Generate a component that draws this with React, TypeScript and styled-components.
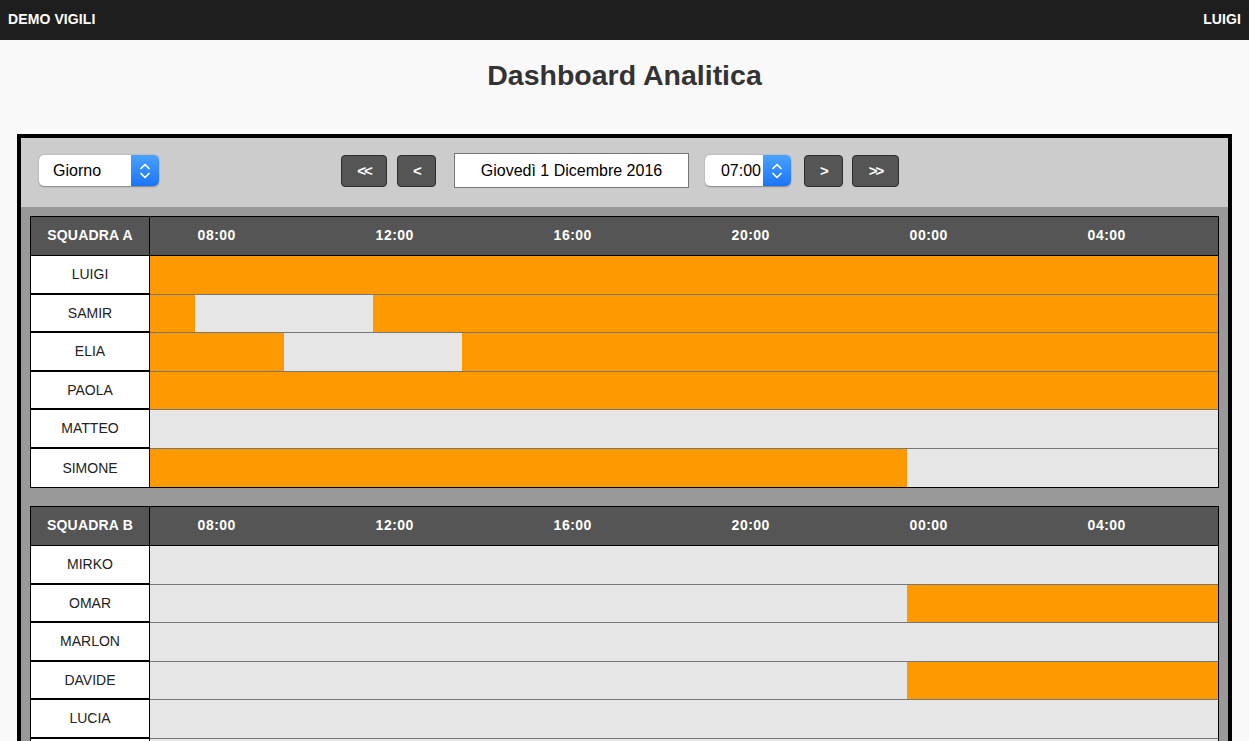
import React from "react";
import styled, { createGlobalStyle } from "styled-components";

const GlobalStyle = createGlobalStyle`
    html, body {
        margin: 0;
        padding: 0;
        background: #f9f9f9;
        font-family: "Liberation Sans", Arial, Helvetica, sans-serif;
        color: #222;
    }
    * {
        box-sizing: border-box;
    }
`;

type Shift = [number, number];

interface Member {
    name: string;
    shifts: Shift[];
}

interface Team {
    title: string;
    members: Member[];
}

// ore partono dalle 07:00, indice 0 = 07:00
const teams: Team[] = [
    {
        title: "SQUADRA A",
        members: [
            { name: "LUIGI", shifts: [[0, 24]] },
            { name: "SAMIR", shifts: [[0, 1], [5, 24]] },
            { name: "ELIA", shifts: [[0, 3], [7, 24]] },
            { name: "PAOLA", shifts: [[0, 24]] },
            { name: "MATTEO", shifts: [] },
            { name: "SIMONE", shifts: [[0, 17]] },
        ],
    },
    {
        title: "SQUADRA B",
        members: [
            { name: "MIRKO", shifts: [] },
            { name: "OMAR", shifts: [[17, 24]] },
            { name: "MARLON", shifts: [] },
            { name: "DAVIDE", shifts: [[17, 24]] },
            { name: "LUCIA", shifts: [] },
            { name: "", shifts: [] },
        ],
    },
];

const hours = Array.from({ length: 24 }, (_, i) => {
    const h = (7 + i) % 24;
    return i % 4 === 1 ? `${String(h).padStart(2, "0")}:00` : "";
});

const Chevrons = () => (
    <svg width="14" height="22" viewBox="0 0 14 22" fill="none">
        <path d="M3 8.5 L7 4.5 L11 8.5" stroke="#fff" strokeWidth="1.7" strokeLinecap="round" strokeLinejoin="round" />
        <path d="M3 13.5 L7 17.5 L11 13.5" stroke="#fff" strokeWidth="1.7" strokeLinecap="round" strokeLinejoin="round" />
    </svg>
);

export default function App() {
    return (
        <>
            <GlobalStyle />
            <TopBar>
                <Brand>DEMO VIGILI</Brand>
                <UserName>LUIGI</UserName>
            </TopBar>
            <Title>Dashboard Analitica</Title>
            <Panel>
                <Toolbar>
                    <Select $width={120}>
                        <SelectLabel>Giorno</SelectLabel>
                        <SelectArrow>
                            <Chevrons />
                        </SelectArrow>
                    </Select>
                    <Nav>
                        <NavButton $width={46}>&lt;&lt;</NavButton>
                        <NavButton $width={39}>&lt;</NavButton>
                        <DateBox>Giovedì 1 Dicembre 2016</DateBox>
                        <Select $width={86}>
                            <TimeLabel>07:00</TimeLabel>
                            <SelectArrow>
                                <Chevrons />
                            </SelectArrow>
                        </Select>
                        <NavButton $width={39}>&gt;</NavButton>
                        <NavButton $width={47}>&gt;&gt;</NavButton>
                    </Nav>
                </Toolbar>
                <Content>
                    {teams.map((team) => (
                        <Table key={team.title}>
                            <HeaderRow>
                                <TeamCell>{team.title}</TeamCell>
                                <HourGrid>
                                    {hours.map((h, i) => (
                                        <HourCell key={i}>{h}</HourCell>
                                    ))}
                                </HourGrid>
                            </HeaderRow>
                            {team.members.map((m, idx) => (
                                <Row key={idx}>
                                    <NameCell>{m.name}</NameCell>
                                    <Timeline>
                                        {m.shifts.map(([from, to], i) => (
                                            <Bar key={i} $from={from} $to={to} />
                                        ))}
                                    </Timeline>
                                </Row>
                            ))}
                        </Table>
                    ))}
                </Content>
            </Panel>
        </>
    );
}

const TopBar = styled.header`
    height: 40px;
    background: #1e1e1e;
    color: #fff;
    display: flex;
    align-items: center;
    justify-content: space-between;
    padding: 0 8px 3px;
    font-size: 14px;
    font-weight: bold;
`;

const Brand = styled.div`
    letter-spacing: 0.1px;
`;

const UserName = styled.div`
    letter-spacing: 0.1px;
`;

const Title = styled.h1`
    margin: 0;
    padding: 20px 0 43px;
    line-height: 31px;
    text-align: center;
    font-size: 28.5px;
    font-weight: bold;
    color: #333;
`;

const Panel = styled.main`
    margin: 0 17px;
    border: 4px solid #000;
    background: #999;
`;

const Toolbar = styled.div`
    height: 69px;
    background: #ccc;
    display: flex;
    align-items: center;
    padding: 0 0 4px 18px;
`;

const Select = styled.div<{ $width: number }>`
    width: ${(p) => p.$width}px;
    height: 31px;
    display: flex;
    background: #fff;
    border-radius: 5px;
    box-shadow: 0 0.5px 1.5px rgba(0, 0, 0, 0.35);
    overflow: hidden;
    font-size: 16px;
    color: #000;
`;

const SelectLabel = styled.div`
    flex: 1;
    display: flex;
    align-items: center;
    padding-left: 14px;
`;

const TimeLabel = styled.div`
    flex: 1;
    display: flex;
    align-items: center;
    justify-content: flex-end;
    padding-right: 2px;
`;

const SelectArrow = styled.div`
    width: 28px;
    display: flex;
    align-items: center;
    justify-content: center;
    background: linear-gradient(#4aa2ff, #1b74f5);
`;

const Nav = styled.div`
    display: flex;
    align-items: center;
    margin-left: 182px;
    gap: 10px;

    & > :nth-child(2) {
        margin-right: 8px;
    }
    & > :nth-child(3) {
        margin-right: 6px;
    }
    & > :nth-child(4) {
        margin-right: 3px;
    }
    & > :nth-child(5) {
        margin-right: -1px;
    }
`;

const NavButton = styled.button<{ $width: number }>`
    width: ${(p) => p.$width}px;
    height: 32px;
    padding: 0 0 1px;
    background: #555;
    border: 1px solid #2e2e2e;
    border-radius: 4px;
    color: #fff;
    font-family: "Liberation Sans", Arial, sans-serif;
    font-weight: bold;
    font-size: 15px;
    letter-spacing: -2px;
`;

const DateBox = styled.div`
    width: 235px;
    height: 35px;
    display: flex;
    align-items: center;
    justify-content: center;
    background: #fff;
    border: 1px solid #777;
    font-size: 16px;
    color: #000;
`;

const Content = styled.div`
    padding: 9px;
    display: flex;
    flex-direction: column;
    gap: 18px;
`;

const Table = styled.section`
    border: 1px solid #000;
    background: #fff;
`;

const HeaderRow = styled.div`
    display: grid;
    grid-template-columns: 119px 1fr;
    height: 39px;
    background: #555;
    border-bottom: 1px solid #000;
    color: #fff;
    font-size: 14px;
    font-weight: bold;
`;

const TeamCell = styled.div`
    display: flex;
    align-items: center;
    justify-content: center;
    border-right: 1px solid #000;
    letter-spacing: 0.2px;
    padding-bottom: 2px;
`;

const HourGrid = styled.div`
    display: grid;
    grid-template-columns: repeat(24, 1fr);
`;

const HourCell = styled.div`
    display: flex;
    align-items: center;
    justify-content: center;
    white-space: nowrap;
    letter-spacing: 0.5px;
    padding-bottom: 2px;
`;

const Row = styled.div`
    display: grid;
    grid-template-columns: 119px 1fr;
    height: 38.5px;

    &:last-child > * {
        border-bottom: none;
    }
`;

const NameCell = styled.div`
    display: flex;
    align-items: center;
    justify-content: center;
    border-right: 1px solid #000;
    border-bottom: 2px solid #000;
    font-size: 14px;
    color: #222;
`;

const Timeline = styled.div`
    display: grid;
    grid-template-columns: repeat(24, 1fr);
    background: #e6e6e6;
    border-bottom: 1px solid #777;
`;

const Bar = styled.div<{ $from: number; $to: number }>`
    grid-row: 1;
    grid-column: ${(p) => p.$from + 1} / ${(p) => p.$to + 1};
    background: #ff9900;
`;
